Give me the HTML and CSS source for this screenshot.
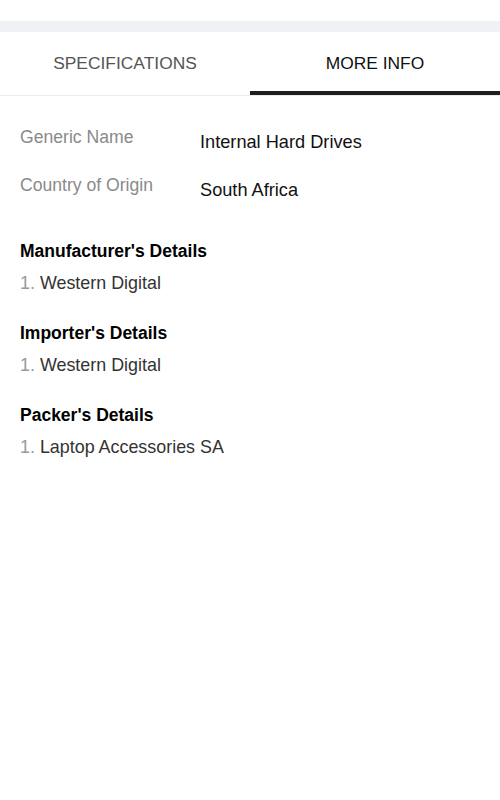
FILE: index.html
```html
<!DOCTYPE html>
<html lang="en">
<head>
    <meta charset="UTF-8">
    <meta name="viewport" content="width=device-width, initial-scale=1.0">
    <title>More Info</title>
    <link rel="stylesheet" href="styles.css">
</head>
<body>
    <div class="top-space"></div>
    <div class="band"></div>

    <!-- Tabs -->
    <div class="tabs">
        <div class="tab">SPECIFICATIONS</div>
        <div class="tab active">MORE INFO</div>
    </div>

    <!-- Generic info -->
    <div class="info">
        <div class="info-row">
            <span class="info-label">Generic Name</span>
            <span class="info-value">Internal Hard Drives</span>
        </div>
        <div class="info-row">
            <span class="info-label">Country of Origin</span>
            <span class="info-value">South Africa</span>
        </div>
    </div>

    <!-- Details -->
    <div class="details">
        <div class="detail-block">
            <h3>Manufacturer's Details</h3>
            <p><span class="num">1.</span> Western Digital</p>
        </div>
        <div class="detail-block">
            <h3>Importer's Details</h3>
            <p><span class="num">1.</span> Western Digital</p>
        </div>
        <div class="detail-block">
            <h3>Packer's Details</h3>
            <p><span class="num">1.</span> Laptop Accessories SA</p>
        </div>
    </div>
</body>
</html>
```

FILE: styles.css
```css
body {
    margin: 0;
    font-family: "Liberation Sans", Arial, sans-serif;
    background-color: #fff;
    color: #111;
}

.top-space {
    height: 21px;
}

.band {
    height: 11px;
    background-color: #f0f1f5;
}

.tabs {
    display: flex;
    border-bottom: 1px solid #ececec;
}

.tab {
    flex: 1;
    text-align: center;
    font-size: 17.4px;
    line-height: 20px;
    padding: 21px 0 18px;
    color: #555;
    border-bottom: 4px solid transparent;
}

.tab.active {
    color: #111;
    border-bottom-color: #1e1e1e;
}

.info {
    padding: 29px 20px 0;
    display: flex;
    flex-direction: column;
    gap: 19px;
}

.info-row {
    display: grid;
    grid-template-columns: 180px 1fr;
    align-items: start;
}

.info-label {
    font-size: 17.6px;
    line-height: 24px;
    color: #8a8a8a;
}

.info-value {
    font-size: 18.2px;
    line-height: 24px;
    margin-top: 5px;
    color: #111;
}

.details {
    padding: 37px 20px 0;
    display: flex;
    flex-direction: column;
    gap: 26px;
}

.detail-block h3 {
    margin: 0 0 8px;
    font-size: 17.5px;
    line-height: 24px;
    font-weight: bold;
    color: #000;
}

.detail-block p {
    margin: 0;
    font-size: 17.9px;
    line-height: 24px;
    color: #333;
}

.num {
    color: #999;
}
```
